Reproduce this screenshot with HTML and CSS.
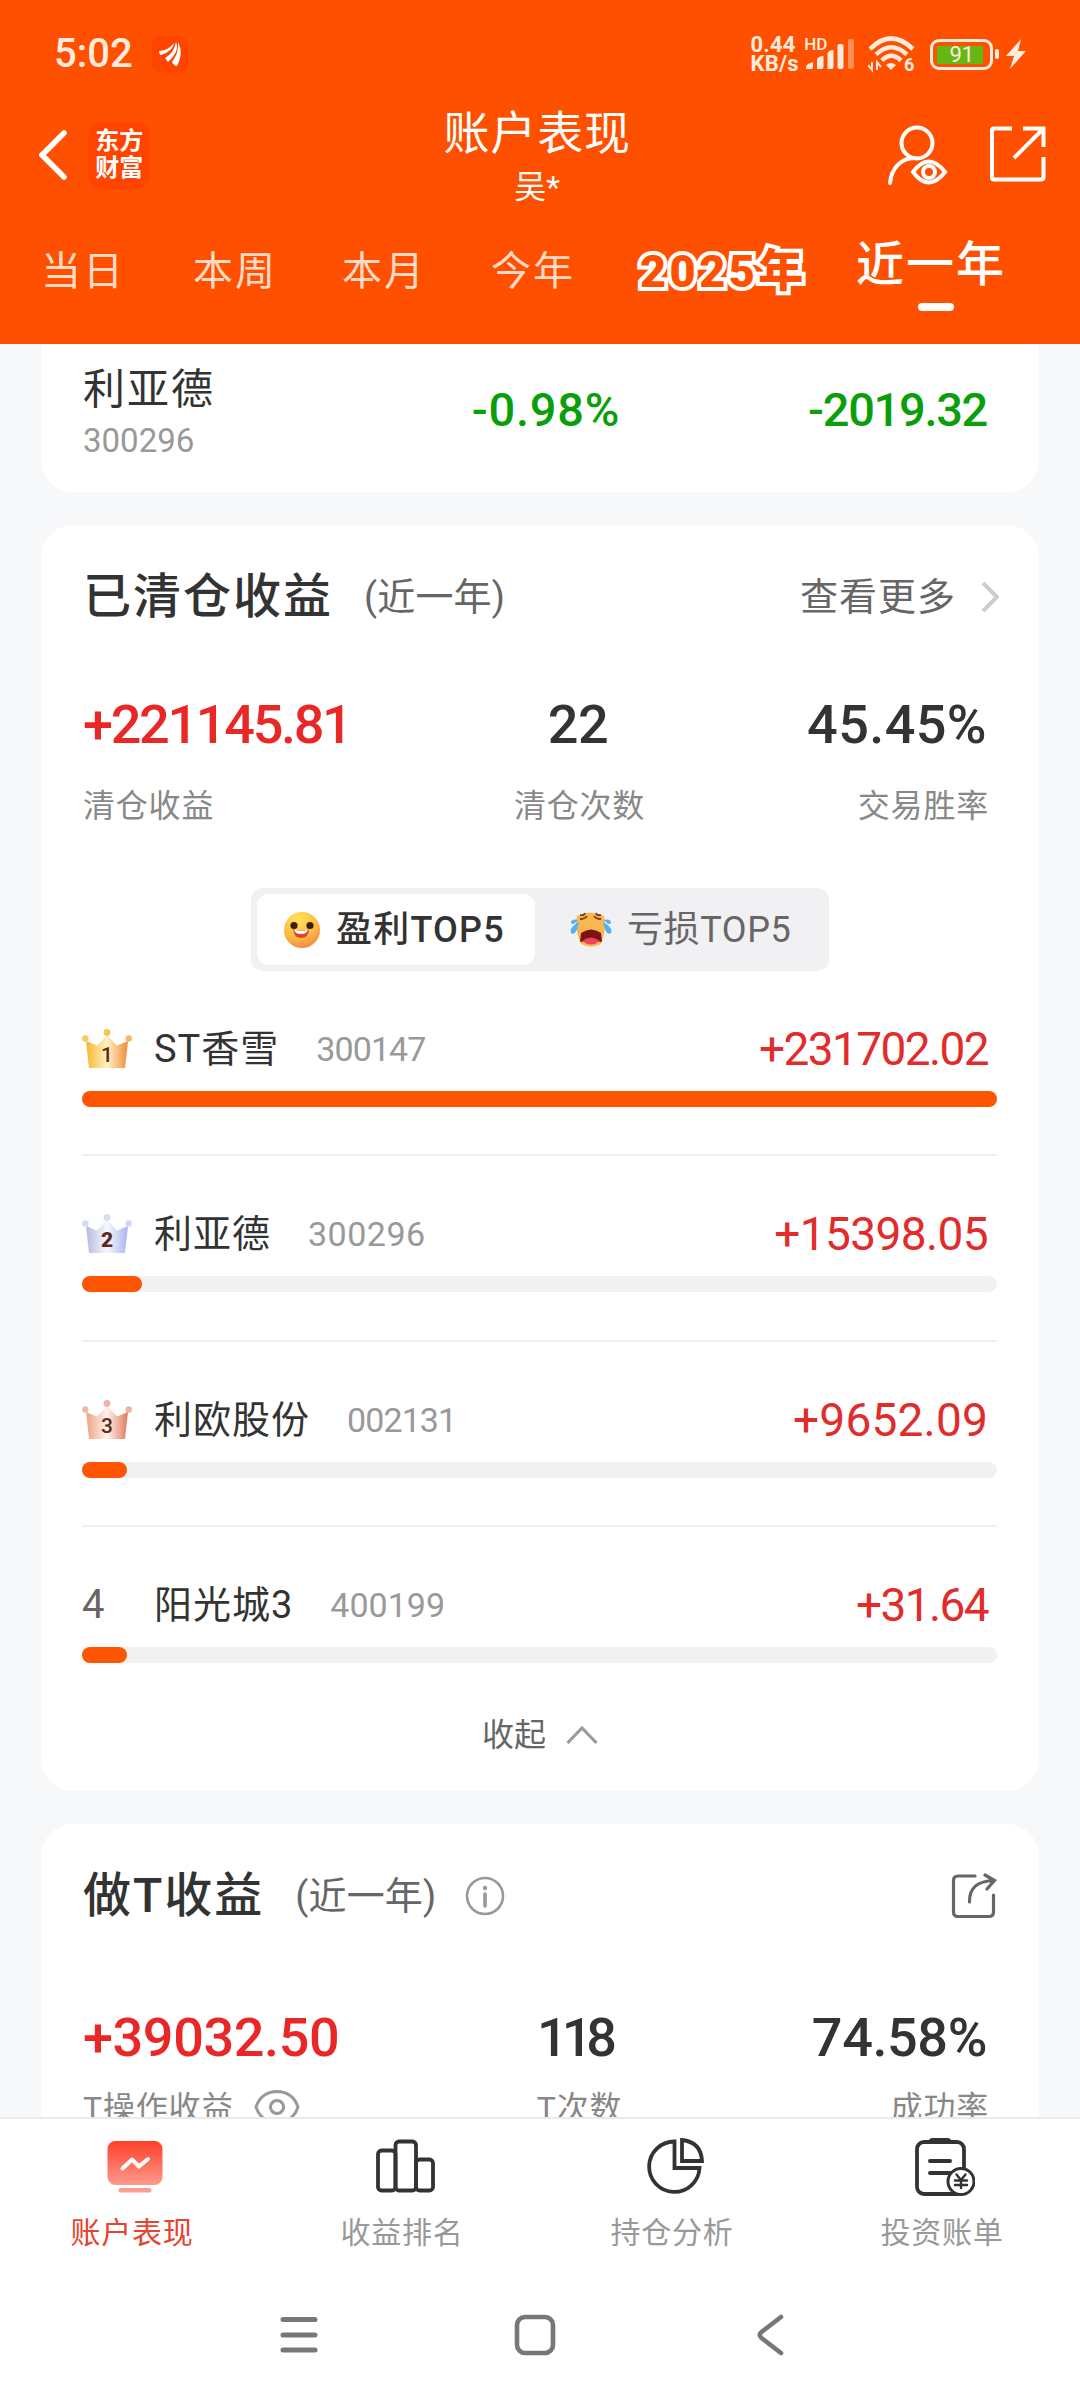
FILE: index.html
```html
<!DOCTYPE html>
<html lang="zh-CN">
<head>
    <meta charset="UTF-8">
    <meta name="viewport" content="width=device-width, initial-scale=1.0">
    <title>账户表现</title>
    <link rel="stylesheet" href="styles.css">
</head>
<body>
    <div class="screen">
        <header class="header">
            <div class="status-bar">
                <span class="time">5:02</span>
                <svg class="status-app" width="36" height="36" viewBox="0 0 36 36">
                    <rect width="36" height="36" rx="8" fill="#ff4400"/>
                    <path d="M7 15 Q17 14 22 7 Q21 15 9 19 Q7 18 7 15Z M13 22 Q22 17 24 6 Q28 15 16 26Z M20 26 Q27 17 26 6 Q32 17 25 30 Q22 30 20 26Z" fill="#fff"/>
                </svg>
                <div class="net-speed"><span>0.44</span><span>KB/s</span></div>
                <div class="signal">
                    <span class="hd">HD</span>
                    <svg width="50" height="32" viewBox="0 0 50 32">
                        <g fill="#ffeade">
                            <path d="M0 31 Q-1 26 7 24 V29 Q7 31 5 31Z"/>
                            <path d="M11 31 V21 Q13 18 17.500 18 V29 Q17.500 31 15.500 31Z"/>
                            <path d="M21.500 31 V15 Q23 12 27.500 12 V29 Q27.500 31 25.500 31Z"/>
                            <rect x="31.500" y="6" width="6" height="25" rx="2"/>
                            <rect x="42" y="1" width="6" height="30" rx="2" opacity=".4"/>
                        </g>
                    </svg>
                </div>
                <svg class="wifi" width="48" height="38" viewBox="0 0 48 38">
                    <g fill="none" stroke="#ffeade" stroke-width="4.500">
                        <path d="M2 14 Q23 -7 45 14"/>
                        <path d="M8 19.500 Q23 5 39 19.500"/>
                        <path d="M14 25.500 Q23 16 33 25.500"/>
                        <path d="M4 27 V35 L0 30 M9 35 V27 L13 32" stroke-width="2"/>
                    </g>
                    <path d="M18 30 Q23 26 28 30 L23 35Z" fill="#ffeade"/>
                    <text x="36" y="36" class="wifi-gen">6</text>
                </svg>
                <div class="battery"><span class="battery-level">91</span></div>
                <span class="battery-nub"></span>
                <svg class="bolt" width="20" height="30" viewBox="0 0 20 30">
                    <path d="M15 0 L0 17 H8 L4 30 L20 12 H12Z" fill="#ffeade"/>
                </svg>
            </div>

            <div class="title-bar">
                <svg class="back" width="28" height="50" viewBox="0 0 28 50">
                    <path d="M25 3 L3 25 L25 47" fill="none" stroke="#fff" stroke-width="5.500" stroke-linecap="round"/>
                </svg>
                <div class="brand"><span>东方</span><span>财富</span></div>
                <div class="title">
                    <h1>账户表现</h1>
                    <p>吴*</p>
                </div>
                <svg class="user" width="62" height="62" viewBox="0 0 62 62">
                    <g fill="none" stroke="#fff" stroke-width="4" stroke-linecap="round">
                        <circle cx="31" cy="18" r="15.500"/>
                        <path d="M4 58 C5.500 43 15 33 29 33"/>
                        <path d="M27 47 Q42.500 26 59 47 Q42.500 68 27 47Z"/>
                        <circle cx="43" cy="47" r="6"/>
                    </g>
                </svg>
                <svg class="open" width="56" height="56" viewBox="0 0 56 56">
                    <path d="M22 2.500 H4 Q2 2.500 2 4.500 V51.500 Q2 53.500 4 53.500 H51 Q53.500 53.500 53.500 51.500 V31 M33 2.500 H53.500 V21 M53 3 L24 32" fill="none" stroke="#fff" stroke-width="4"/>
                </svg>
            </div>

            <nav class="tabs">
                <a class="tab">当日</a>
                <a class="tab">本周</a>
                <a class="tab">本月</a>
                <a class="tab">今年</a>
                <a class="tab tab-year">2025年</a>
                <a class="tab active">近一年</a>
            </nav>
        </header>

        <main class="content">
            <section class="card holding">
                <div class="stock">
                    <div class="stock-name">利亚德</div>
                    <div class="stock-code">300296</div>
                </div>
                <div class="holding-rate">-0.98%</div>
                <div class="holding-amount">-2019.32</div>
            </section>

            <section class="card cleared">
                <div class="card-head">
                    <h2>已清仓收益</h2>
                    <span class="period">(近一年)</span>
                    <a class="more">查看更多</a>
                    <svg width="18" height="32" viewBox="0 0 18 32">
                        <path d="M2 2 L16 16 L2 30" fill="none" stroke="#ccc" stroke-width="4"/>
                    </svg>
                </div>
                <div class="stats">
                    <div><b class="up tight">+221145.81</b><span>清仓收益</span></div>
                    <div><b>22</b><span>清仓次数</span></div>
                    <div><b class="wide">45.45%</b><span>交易胜率</span></div>
                </div>
                <div class="segment">
                    <div class="segment-item active">
                        <svg width="36" height="38" viewBox="0 0 36 38">
                            <defs>
                                <radialGradient id="face" cx=".4" cy=".2" r=".9">
                                    <stop offset="0" stop-color="#ffe35a"/>
                                    <stop offset=".6" stop-color="#fdb93f"/>
                                    <stop offset="1" stop-color="#f4764a"/>
                                </radialGradient>
                            </defs>
                            <circle cx="18" cy="19" r="18" fill="url(#face)"/>
                            <circle cx="10" cy="14.500" r="3.600" fill="#3c1d18"/>
                            <circle cx="26" cy="14.500" r="3.600" fill="#3c1d18"/>
                            <path d="M9 18 Q17 21 25 18 Q25 27 17 27 Q10 27 9 18Z" fill="#e2432f"/>
                            <path d="M10 18.500 Q17 21 24 18.500 Q23 23 17 23 Q11 23 10 18.500Z" fill="#fff"/>
                        </svg>
                        <span>盈利TOP5</span>
                    </div>
                    <div class="segment-item">
                        <svg width="42" height="38" viewBox="0 0 42 38">
                            <path d="M7 5 Q20 -2 34 5 Q37 17 31 33 Q21 38 11 33 Q4 17 7 5Z" fill="#f9b750"/>
                            <path d="M10 4 Q14 5 15 2 M10 8 Q15 8 17 5 M31 4 Q27 5 26 2 M31 8 Q26 8 24 5" fill="none" stroke="#7b3f1d" stroke-width="1.800"/>
                            <path d="M11 22 Q21 15 31 22 L32 31 Q21 28 10 31Z" fill="#7c1313"/>
                            <path d="M12 30 Q21 23 30 30 Q21 37 12 30Z" fill="#ee4257"/>
                            <path d="M8 9 Q1 7 1 12 Q3 15 8 9Z M9 11 Q-1 16 1 22 Q6 26 9 11Z M34 9 Q41 7 41 12 Q39 15 34 9Z M33 11 Q43 16 41 22 Q36 26 33 11Z" fill="#53b0f5"/>
                        </svg>
                        <span>亏损TOP5</span>
                    </div>
                </div>

                <!-- gradients shared by the three crowns -->
                <svg class="defs" width="0" height="0">
                    <defs>
                        <linearGradient id="gold"><stop offset="0" stop-color="#f7b52e"/><stop offset=".5" stop-color="#fff3c4"/><stop offset="1" stop-color="#f08a38"/></linearGradient>
                        <linearGradient id="silver"><stop offset="0" stop-color="#b7b9dd"/><stop offset=".5" stop-color="#f7f8ff"/><stop offset="1" stop-color="#aab4ec"/></linearGradient>
                        <linearGradient id="bronze"><stop offset="0" stop-color="#f0a283"/><stop offset=".5" stop-color="#fff1ea"/><stop offset="1" stop-color="#e07a5e"/></linearGradient>
                    </defs>
                </svg>
                <ul class="ranking">
                    <li>
                        <div class="rank-row">
                            <svg class="crown" width="50" height="40" viewBox="0 0 50 40">
                                <path d="M4 12 L15 16.500 L25 6 L35 16.500 L46 12 L43 39 H7Z" fill="url(#gold)"/>
                                <circle cx="3.300" cy="9.500" r="3.200" fill="#f8cb5c"/><circle cx="25" cy="3.500" r="3.400" fill="#f8c552"/><circle cx="46.700" cy="9.500" r="3.200" fill="#f6b95e"/>
                                <text x="25" y="33">1</text>
                            </svg>
                            <span class="rank-name">ST香雪</span>
                            <span class="rank-code tight">300147</span>
                            <span class="rank-amount tight">+231702.02</span>
                        </div>
                        <div class="bar"><i style="width: 100%"></i></div>
                    </li>
                    <li>
                        <div class="rank-row">
                            <svg class="crown" width="50" height="40" viewBox="0 0 50 40">
                                <path d="M4 12 L15 16.500 L25 6 L35 16.500 L46 12 L43 39 H7Z" fill="url(#silver)"/>
                                <circle cx="3.300" cy="9.500" r="3.200" fill="#d5d9f2"/><circle cx="25" cy="3.500" r="3.400" fill="#d9dcf3"/><circle cx="46.700" cy="9.500" r="3.200" fill="#cfd6f5"/>
                                <text x="25" y="33" class="heavy">2</text>
                            </svg>
                            <span class="rank-name">利亚德</span>
                            <span class="rank-code wide">300296</span>
                            <span class="rank-amount">+15398.05</span>
                        </div>
                        <div class="bar"><i style="width: 6.6%"></i></div>
                    </li>
                    <li>
                        <div class="rank-row">
                            <svg class="crown" width="50" height="40" viewBox="0 0 50 40">
                                <path d="M4 12 L15 16.500 L25 6 L35 16.500 L46 12 L43 39 H7Z" fill="url(#bronze)"/>
                                <circle cx="3.300" cy="9.500" r="3.200" fill="#efb9a6"/><circle cx="25" cy="3.500" r="3.400" fill="#f0b5a2"/><circle cx="46.700" cy="9.500" r="3.200" fill="#eeb3a0"/>
                                <text x="25" y="33">3</text>
                            </svg>
                            <span class="rank-name">利欧股份</span>
                            <span class="rank-code tight">002131</span>
                            <span class="rank-amount wide">+9652.09</span>
                        </div>
                        <div class="bar"><i style="width: 4.9%"></i></div>
                    </li>
                    <li>
                        <div class="rank-row">
                            <span class="rank-no">4</span>
                            <span class="rank-name">阳光城3</span>
                            <span class="rank-code">400199</span>
                            <span class="rank-amount tight">+31.64</span>
                        </div>
                        <div class="bar"><i style="width: 4.9%"></i></div>
                    </li>
                </ul>
                <div class="collapse">
                    <span>收起</span>
                    <svg width="32" height="20" viewBox="0 0 32 20">
                        <path d="M1.500 18 L16 3 L30.500 18" fill="none" stroke="#999" stroke-width="3"/>
                    </svg>
                </div>
            </section>

            <section class="card t-profit">
                <div class="card-head">
                    <h2>做T收益</h2>
                    <span class="period">(近一年)</span>
                    <svg class="info" width="40" height="40" viewBox="0 0 40 40">
                        <circle cx="20" cy="20" r="18" fill="none" stroke="#999" stroke-width="2.600"/>
                        <circle cx="20" cy="12" r="2.200" fill="#999"/>
                        <path d="M20 18 V30" stroke="#999" stroke-width="3.600" stroke-linecap="round"/>
                    </svg>
                    <svg class="share" width="46" height="46" viewBox="0 0 46 46">
                        <path d="M24 3 H7 Q2.500 3 2.500 7.500 V39 Q2.500 43.500 7 43.500 H38 Q42.500 43.500 42.500 39 V22" fill="none" stroke="#666" stroke-width="3.200" stroke-linecap="round"/>
                        <path d="M18.500 29 Q18 8 43 7.500 M34 2 L43.500 7.500 L36 16" fill="none" stroke="#666" stroke-width="3.200" stroke-linecap="round"/>
                    </svg>
                </div>
                <div class="stats">
                    <div>
                        <b class="up">+39032.50</b>
                        <span>T操作收益
                            <svg class="eye" width="46" height="34" viewBox="0 0 46 34">
                                <path d="M2 17 Q7 2 23 1.500 Q39 2 44 17 Q39 32 23 32.500 Q7 32 2 17Z M23 10.500 A6.500 6.500 0 1 0 23.100 10.500Z" fill="none" stroke="#999" stroke-width="3"/>
                            </svg>
                        </span>
                    </div>
                    <div><b class="tighter">118</b><span>T次数</span></div>
                    <div><b>74.58%</b><span>成功率</span></div>
                </div>
            </section>
        </main>

        <footer class="tab-bar">
            <a class="tab-item active">
                <svg width="60" height="60" viewBox="0 0 60 60">
                    <defs>
                        <linearGradient id="red" x1="0" y1="0" x2="0" y2="1"><stop offset="0" stop-color="#fe3f28"/><stop offset="1" stop-color="#ff9a8e"/></linearGradient>
                    </defs>
                    <rect x="2.500" y="3" width="55" height="44" rx="8" fill="url(#red)"/>
                    <rect x="13.500" y="50" width="33" height="4.500" rx="2" fill="#fb9c90"/>
                    <path d="M17.500 30.500 L27 21.500 L34 28.500 L43 21" fill="none" stroke="#fff" stroke-width="4" stroke-linecap="round" stroke-linejoin="round"/>
                </svg>
                <span>账户表现</span>
            </a>
            <a class="tab-item">
                <svg width="60" height="60" viewBox="0 0 60 60">
                    <g fill="none" stroke="#333" stroke-width="3.800">
                        <rect x="3" y="12.500" width="17.500" height="40" rx="3.500"/>
                        <rect x="20.500" y="3.500" width="20.500" height="49" rx="3.500"/>
                        <rect x="41" y="21.500" width="17" height="31" rx="3.500"/>
                    </g>
                </svg>
                <span>收益排名</span>
            </a>
            <a class="tab-item">
                <svg width="60" height="60" viewBox="0 0 60 60">
                    <g fill="none" stroke="#333" stroke-width="3.800">
                        <path d="M29.500 3.500 V30 H54.500 A25.200 25.200 0 1 1 29.500 3.500Z"/>
                        <path d="M37 2 V23 H57 Q56 4 37 2Z"/>
                    </g>
                </svg>
                <span>持仓分析</span>
            </a>
            <a class="tab-item">
                <svg width="60" height="60" viewBox="0 0 60 60">
                    <rect x="2" y="4" width="47" height="52" rx="7" fill="none" stroke="#333" stroke-width="3.800"/>
                    <path d="M13 4 Q14 0 18 0 H32 Q36 0 37 4Z" fill="#333"/>
                    <path d="M15 23 H35 M15 35 H35" stroke="#333" stroke-width="4" stroke-linecap="round"/>
                    <circle cx="46" cy="43.500" r="13" fill="#fff" stroke="#333" stroke-width="3"/>
                    <path d="M41.500 36.500 L46 42 L50.500 36.500 M46 42 V50 M40 42.500 H52 M40 47 H52" fill="none" stroke="#333" stroke-width="2.400" stroke-linecap="round"/>
                </svg>
                <span>投资账单</span>
            </a>
        </footer>

        <div class="system-nav">
            <svg width="42" height="42" viewBox="0 0 42 42">
                <path d="M4 5.500 H36 M4 21 H36 M4 36 H36" stroke="#777" stroke-width="5" stroke-linecap="round"/>
            </svg>
            <svg width="42" height="42" viewBox="0 0 42 42">
                <rect x="3" y="3" width="36" height="36" rx="8" fill="none" stroke="#777" stroke-width="4.600"/>
            </svg>
            <svg width="42" height="42" viewBox="0 0 42 42">
                <path d="M32 3 L12.500 18 Q9 21 12.500 24 L32 39" fill="none" stroke="#777" stroke-width="4.600" stroke-linecap="round"/>
            </svg>
        </div>
    </div>
</body>
</html>
```
FILE: styles.css
```css
* {
    box-sizing: border-box;
}
body {
    margin: 0;
    font-family: Roboto, "Noto Sans CJK SC", sans-serif;
    color: #333;
    background: #f7f8fa;
}
h1, h2, p, ul {
    margin: 0;
    padding: 0;
    font-weight: normal;
}
svg {
    display: block;
    flex: none;
}
.screen {
    width: 1080px;
    height: 2400px;
    display: flex;
    flex-direction: column;
    overflow: hidden;
}

/* header */
.header {
    height: 344px;
    flex: none;
    background: #ff5000;
    color: #fff;
}
.status-bar {
    height: 108px;
    padding: 0 54px;
    display: flex;
    align-items: center;
    color: #ffeade;
}
.time {
    width: 98px;
    font-size: 40px;
    font-weight: 500;
    line-height: 46px;
}
.net-speed {
    margin-left: 563px;
    width: 50px;
    display: flex;
    flex-direction: column;
    font-size: 22px;
    font-weight: bold;
    line-height: 19.5px;
    letter-spacing: 0.2px;
    white-space: nowrap;
}
.signal {
    position: relative;
    width: 50px;
    margin-left: 6px;
}
.hd {
    position: absolute;
    left: -2px;
    top: -3px;
    font-size: 17px;
    font-weight: 500;
    line-height: 18px;
}
.wifi {
    margin-left: 12px;
}
.wifi-gen {
    font-size: 18px;
    font-weight: bold;
    fill: #ffeade;
}
.battery {
    width: 63px;
    height: 31px;
    margin-left: 14px;
    padding: 4px;
    border: 3px solid #ffeade;
    border-radius: 9px;
}
.battery-level {
    display: block;
    width: 46px;
    height: 18px;
    background: #65b814;
    font-size: 22px;
    line-height: 18px;
    text-align: center;
    padding-left: 3px;
}
.battery-nub {
    width: 4px;
    height: 10px;
    margin-left: 2px;
    background: #ffeade;
    border-radius: 2px;
}
.bolt {
    margin-left: 7px;
}
.title-bar {
    height: 112px;
    padding: 0 34px 0 39px;
    display: flex;
    align-items: center;
}
.back {
    margin-top: -18px;
}
.brand {
    width: 64px;
    height: 67px;
    margin: -18px 0 0 21px;
    display: flex;
    flex-direction: column;
    align-items: center;
    justify-content: center;
    background: #ff4400;
    border-radius: 14px;
    font-size: 24px;
    font-weight: bold;
    line-height: 27px;
}
.title {
    width: 188px;
    height: 112px;
    margin-left: 293px;
    text-align: center;
}
.title h1 {
    font-size: 46px;
    line-height: 51px;
    letter-spacing: 0.9px;
    white-space: nowrap;
}
.title p {
    font-size: 32px;
    line-height: 56px;
}
.user {
    margin: -16px 0 0 255px;
}
.open {
    margin: -20px 0 0 42px;
}
.tabs {
    height: 124px;
    padding: 25px 0 0 41px;
    display: flex;
}
.tab {
    width: 149px;
    font-size: 40px;
    line-height: 54px;
    letter-spacing: 2px;
    color: #ffdac7;
    white-space: nowrap;
}
.tab:first-child {
    width: 152px;
}
.tab.active {
    position: relative;
    top: -7px;
    font-size: 48px;
    font-weight: 500;
    color: #fff;
}
.tab.active::after {
    content: "";
    position: absolute;
    left: 62px;
    top: 65px;
    width: 36px;
    height: 8px;
    border-radius: 4px;
    background: #fff;
}
.tab-year {
    width: 216px;
    font-size: 45px;
    font-weight: 900;
    letter-spacing: 3.5px;
    color: #ff5000;
    -webkit-text-stroke: 8px #fff;
    paint-order: stroke fill;
}

/* cards */
.content {
    height: 1773px;
    flex: none;
    padding: 0 41px;
    overflow: hidden;
}
.card {
    padding: 0 42px 0 41px;
    background: #fff;
    border-radius: 32px;
}
.holding {
    height: 148px;
    border-radius: 0 0 32px 32px;
    display: grid;
    grid-template-columns: 364px 200px 1fr;
    padding-right: 52px;
    font-size: 47px;
    font-weight: 500;
    line-height: 132px;
    color: #0a9f0a;
}
.stock {
    padding: 18px 0 0 1px;
    font-weight: normal;
}
.stock-name {
    font-size: 42px;
    line-height: 56px;
    letter-spacing: 2px;
    color: #333;
}
.stock-code {
    font-size: 33px;
    line-height: 45px;
    color: #999;
}
.holding-rate {
    text-align: center;
    letter-spacing: 0.8px;
}
.holding-amount {
    text-align: right;
    letter-spacing: -1.3px;
}
.cleared {
    height: 1266px;
    margin: 33px 0;
}
.card-head {
    height: 144px;
    display: flex;
    align-items: center;
    line-height: 60px;
}
.card-head h2 {
    margin-left: 1px;
    font-size: 48px;
    font-weight: 500;
    letter-spacing: 2px;
}
.period, .more {
    font-size: 38px;
    letter-spacing: 1px;
    color: #666;
}
.period {
    margin-left: 31px;
    letter-spacing: 0.2px;
}
.more {
    margin-left: auto;
    margin-right: 25px;
}
.card-head .more + svg {
    margin-right: -2px;
}
.stats {
    display: grid;
    grid-template-columns: 396px 200px 1fr;
    padding-right: 10px;
}
.stats b {
    display: block;
    font-size: 54px;
    font-weight: 500;
    line-height: 112px;
    letter-spacing: -0.4px;
}
.stats .up {
    margin-left: 1px;
    color: #ea2727;
}
.stats .tight {
    letter-spacing: -2.3px;
}
.stats .tighter {
    margin-left: -8px;
    letter-spacing: -6px;
}
.stats .wide {
    letter-spacing: 0.4px;
}
.stats span {
    display: block;
    margin: 1px -2px 0 1px;
    font-size: 32px;
    line-height: 48px;
    letter-spacing: 0.8px;
    color: #888;
    white-space: nowrap;
}
.stats div:nth-child(2) {
    text-align: center;
}
.stats div:nth-child(3) {
    text-align: right;
}
.segment {
    width: 578px;
    height: 83px;
    margin: 58px 0 0 169px;
    padding: 6px;
    display: flex;
    background: #f1f1f4;
    border-radius: 12px;
}
.segment-item {
    display: flex;
    align-items: center;
    width: 278px;
    padding-left: 27px;
    font-size: 36px;
    line-height: 48px;
    letter-spacing: 0.6px;
    color: #666;
    border-radius: 12px;
}
.segment-item + .segment-item {
    padding-left: 35px;
}
.segment-item span {
    margin-left: 15px;
    white-space: nowrap;
}
.segment-item.active {
    background: #fff;
    color: #333;
    font-weight: 500;
}
.segment-item.active span {
    margin-left: 16px;
    letter-spacing: 1.2px;
}
.defs {
    position: absolute;
}
.ranking {
    list-style: none;
}
.ranking li {
    height: 185.3px;
    padding-top: 55px;
    border-bottom: 2px solid #f0f0f0;
}
.ranking li:last-child {
    border-bottom: none;
}
.rank-row {
    height: 46px;
    margin-bottom: 19px;
    padding-right: 9px;
    display: flex;
    align-items: center;
    line-height: 46px;
}
.crown, .rank-no {
    width: 50px;
    margin-right: 22px;
}
.crown text {
    font-size: 21px;
    font-weight: 500;
    text-anchor: middle;
    fill: #5c2a1c;
}
.crown .heavy {
    font-weight: 900;
}
.rank-no {
    font-size: 40px;
    color: #666;
}
.rank-name {
    font-size: 38px;
    letter-spacing: 1px;
}
.rank-code {
    margin-left: 37px;
    font-size: 34px;
    color: #999;
}
.rank-code.tight {
    letter-spacing: -0.9px;
}
.rank-code.wide {
    letter-spacing: 0.5px;
}
.rank-amount {
    margin-left: auto;
    font-size: 46px;
    letter-spacing: -0.6px;
    color: #e22b2b;
}
.rank-amount.tight {
    letter-spacing: -1.6px;
}
.rank-amount.wide {
    letter-spacing: 0.2px;
}
.bar {
    height: 16px;
    border-radius: 8px;
    background: #f1f1f4;
}
.bar i {
    display: block;
    height: 16px;
    border-radius: 8px;
    background: #ff5500;
}
.collapse {
    display: flex;
    justify-content: center;
    align-items: center;
    gap: 20px;
    margin-top: -1px;
    height: 48px;
    padding-left: 1px;
    font-size: 32px;
    line-height: 48px;
    color: #666;
}
.t-profit {
    height: 400px;
}
.info {
    margin-left: 28px;
}
.share {
    margin-left: auto;
}
.t-profit .stats b {
    line-height: 140px;
    height: 120px;
}
.t-profit .stats span {
    margin-top: -3px;
    line-height: 46px;
}
.eye {
    display: inline-block;
    vertical-align: -5px;
    margin-left: 11px;
}

/* bottom bars */
.tab-bar {
    height: 153px;
    flex: none;
    display: flex;
    background: #fff;
    border-top: 2px solid #eaeaea;
}
.tab-item {
    width: 270px;
    padding-top: 19px;
    display: flex;
    flex-direction: column;
    align-items: center;
    color: #999;
}
.tab-item span {
    margin: 13px 6px 0 0;
    font-size: 30px;
    line-height: 44px;
    letter-spacing: 0.7px;
}
.tab-item.active span {
    color: #e8432e;
}
.system-nav {
    flex: 1;
    padding: 44px 0 0 279px;
    display: flex;
    gap: 193px;
    background: #fff;
}
```
